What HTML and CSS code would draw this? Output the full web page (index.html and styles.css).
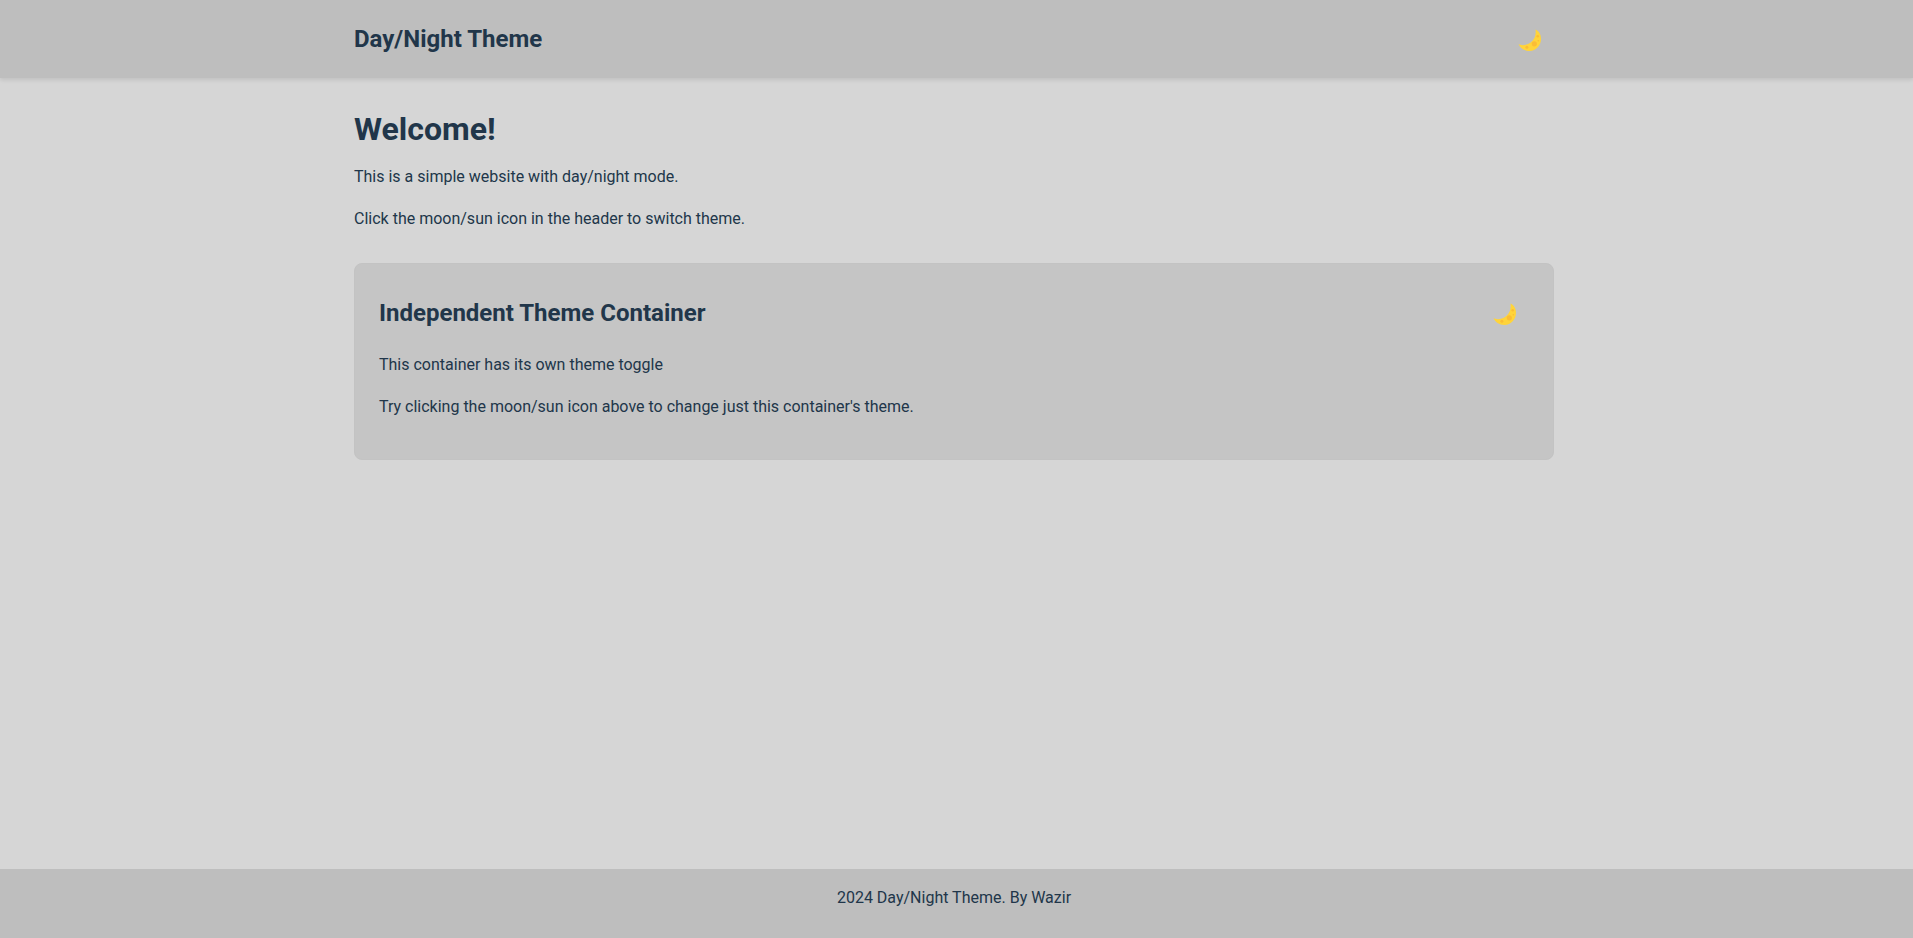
FILE: index.html
```html
<!DOCTYPE html>
<html lang="en">
<head>
<meta charset="UTF-8">
<title>Day/Night Theme</title>
<link rel="stylesheet" href="styles.css">
</head>
<body>
<svg class="symbols" aria-hidden="true">
  <symbol id="moon" viewBox="0 0 24 24">
    <path fill="#ffd43a" d="M17.500 1.500C21.500 3.500 23 7.200 23 10.800C23 17.500 18 23 11.600 23C6.100 23 2.100 20 .5 16C3 17.800 8.500 17.700 12.700 14.600C17 11.300 18.200 6.500 17.500 1.500Z"/>
    <g fill="#fbbd36">
      <circle cx="16.300" cy="15.800" r="2.600"/>
      <circle cx="8.900" cy="19.200" r="1.500"/>
      <circle cx="19.700" cy="8.200" r="1.300"/>
      <circle cx="20.300" cy="12.800" r=".8"/>
    </g>
  </symbol>
</svg>
<header class="header">
  <div class="container header-row">
    <h1 class="logo">Day/Night Theme</h1>
    <button class="toggle" aria-label="Toggle theme"><svg class="moon"><use href="#moon"/></svg></button>
  </div>
</header>
<main class="container main">
  <h2 class="title">Welcome!</h2>
  <p>This is a simple website with day/night mode.</p>
  <p>Click the moon/sun icon in the header to switch theme.</p>
  <section class="card">
    <div class="card-head">
      <h2 class="logo">Independent Theme Container</h2>
      <button class="toggle" aria-label="Toggle container theme"><svg class="moon"><use href="#moon"/></svg></button>
    </div>
    <p>This container has its own theme toggle</p>
    <p>Try clicking the moon/sun icon above to change just this container's theme.</p>
  </section>
</main>
<footer class="footer">2024 Day/Night Theme. By Wazir</footer>
</body>
</html>
```
FILE: styles.css
```css
* { box-sizing: border-box; margin: 0; padding: 0; }
body { min-height: 100vh; display: flex; flex-direction: column; background: #d6d6d6; color: #21364a; font-family: Roboto, sans-serif; font-size: 16px; line-height: 1.6; }
.symbols { display: none; }
.container { width: 1200px; margin: 0 auto; }
.header, .footer { background: #bebebe; padding-right: 5px; }
.header { height: 78px; box-shadow: 0 2px 4px rgba(0,0,0,.1); }
.header-row { height: 78px; display: flex; align-items: center; justify-content: space-between; }
.logo { font-size: 24px; font-weight: 700; }
.toggle { display: flex; background: none; border: 0; padding: 10px 12px 8px; cursor: pointer; }
.moon { width: 24px; height: 24px; display: block; }
.main { flex: 1; padding-top: 32px; margin-left: calc(50% - 602.5px); }
.title { font-size: 32px; line-height: 38px; margin-bottom: 16px; }
p { margin-bottom: 16px; }
.card { margin-top: 32px; padding: 24px; background: #c5c5c5; border: 1px solid #c3c3c3; border-radius: 8px; }
.card-head { height: 50px; display: flex; align-items: center; justify-content: space-between; margin-bottom: 13.8px; }
.footer { height: 69px; text-align: center; padding-top: 16px; }
```
